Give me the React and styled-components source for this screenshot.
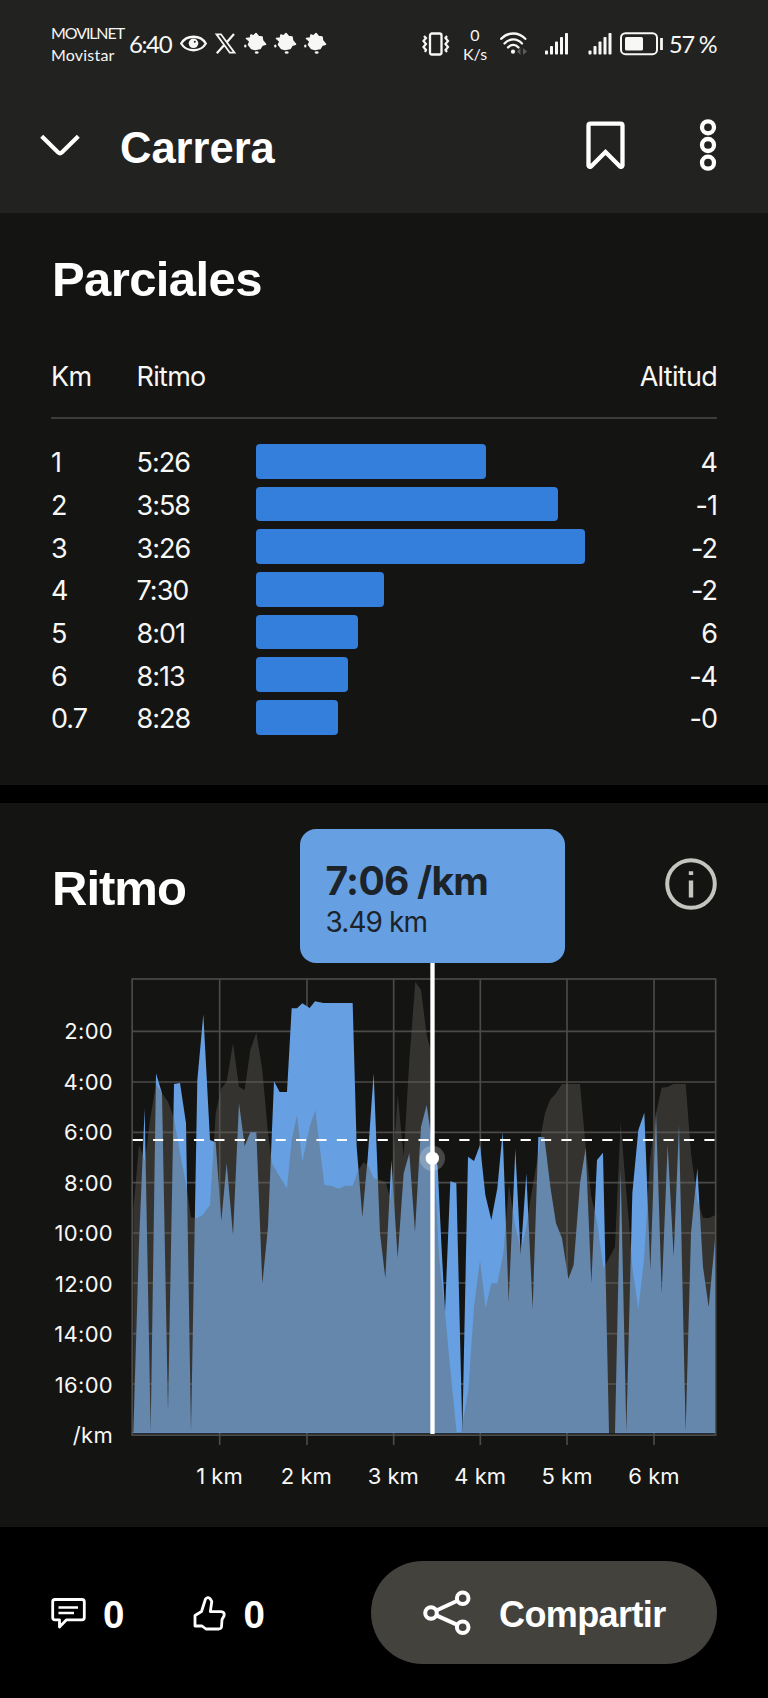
import styled, { createGlobalStyle } from "styled-components";

const GlobalStyle = createGlobalStyle`
  * {
    box-sizing: border-box;
  }

  body {
    margin: 0;
    background-color: #000;
  }

  h1, h2, p {
    margin: 0;
  }
`;

const Screen = styled.div`
  width: 768px;
  height: 1698px;
  display: flex;
  flex-direction: column;
  overflow: hidden;
  color: #f7f7f5;
  background-color: #000;
  font-family: Inter, "Liberation Sans", sans-serif;
`;

const TopArea = styled.header`
  height: 213px;
  background-color: #222220;
`;

const StatusBar = styled.div`
  height: 88px;
  padding: 0 51px;
  display: flex;
  justify-content: space-between;
  font-family: Lato, sans-serif;
`;

const StatusGroup = styled.div`
  display: flex;
  align-items: center;
`;

const Carrier = styled.div`
  width: 78px;
  display: flex;
  flex-direction: column;
`;

const CarrierName = styled.span`
  font-size: 16px;
  line-height: 22.5px;
  white-space: nowrap;
  letter-spacing: ${({ $tracking }) => $tracking};
`;

const Clock = styled.span`
  width: 51px;
  font-size: 24px;
  line-height: 30px;
  letter-spacing: -1.4px;
`;

const NetSpeed = styled.div`
  width: 26px;
  margin: 0 12px;
  display: flex;
  flex-direction: column;
  align-items: center;
  font-size: 16px;
  line-height: 19.5px;
`;

const Battery = styled.span`
  width: 48px;
  margin-left: 4px;
  font-size: 23.5px;
  line-height: 30px;
  letter-spacing: -1.2px;
  white-space: nowrap;
`;

const StatusSvg = styled.svg`
  display: block;
  flex: none;
`;

const TitleBar = styled.div`
  height: 114px;
  padding: 0 51px 0 40px;
  display: flex;
  align-items: center;
`;

const PageTitle = styled.h1`
  flex: 1;
  padding: 6px 0 0 40px;
  font-family: "Liberation Sans", Arial, sans-serif;
  font-size: 43.5px;
  font-weight: 700;
  line-height: 56px;
  color: #fff;
`;

const HeaderActions = styled.div`
  display: flex;
  align-items: center;
  gap: 74px;
`;

const Section = styled.section`
  position: relative;
  height: ${({ $height }) => $height};
  padding: 0 51px;
  background-color: #141412;
`;

const SectionTitle = styled.h2`
  padding-left: 1px;
  font-family: "Liberation Sans", Arial, sans-serif;
  font-size: 49px;
  font-weight: 700;
  line-height: 60px;
  letter-spacing: ${({ $tracking }) => $tracking};
  color: #fff;
`;

const SplitsInner = styled.div`
  padding-top: 36px;
`;

const SplitGrid = styled.div`
  display: grid;
  grid-template-columns: 85.5px 119.5px 1fr 90px;
  align-items: center;
  font-size: 27px;
  letter-spacing: -0.7px;
`;

const SplitsHead = styled(SplitGrid)`
  height: 40px;
  margin-top: 47px;
`;

const SplitRow = styled(SplitGrid)`
  height: 42.67px;
  letter-spacing: -1px;
`;

const Divider = styled.div`
  height: 2px;
  margin: 21px 0;
  background-color: #3c3c3a;
`;

const Cell = styled.span`
  padding-top: ${({ $drop }) => $drop || "0"};
  text-align: ${({ $align }) => $align || "left"};
  white-space: nowrap;
`;

const Bar = styled.div`
  height: 34.5px;
  border-radius: 4px;
  background-color: #357fdc;
`;

const Gap = styled.div`
  height: 18px;
`;

const PaceHead = styled.div`
  padding-top: 55px;
  display: flex;
  justify-content: space-between;
  align-items: flex-start;
  height: 107px;
`;

const Tooltip = styled.div`
  position: absolute;
  top: 25.5px;
  left: 300px;
  width: 264.5px;
  height: 134.5px;
  padding: 27px 25.5px;
  border-radius: 16px;
  background-color: #66a0e3;
  color: #1c2329;
`;

const TooltipPace = styled.p`
  font-size: 39px;
  font-weight: 700;
  line-height: 50px;
  letter-spacing: -0.75px;
  white-space: nowrap;
`;

const TooltipDistance = styled.p`
  font-size: 28px;
  line-height: 32px;
  letter-spacing: -0.9px;
`;

const ChartBody = styled.div`
  margin-top: 50px;
  display: flex;
  gap: 7px;
`;

const YLabels = styled.div`
  flex: none;
  width: 62px;
  padding-top: 46px;
  font-size: 22px;
  letter-spacing: 0.3px;
`;

const YLabel = styled.div`
  height: 50.5px;
  line-height: 50.5px;
  white-space: nowrap;
  display: flex;
  justify-content: flex-end;
`;

const ChartSvg = styled.svg`
  display: block;
  flex: none;
`;

const XLabels = styled.div`
  margin-left: 125px;
  display: flex;
`;

const XLabel = styled.span`
  width: 86.9px;
  text-align: center;
  font-size: 22px;
  line-height: 30px;
`;

const Footer = styled.footer`
  flex: 1;
  padding: 34px 51px 0;
  display: flex;
  align-items: flex-start;
  justify-content: space-between;
  font-family: "Liberation Sans", Arial, sans-serif;
  font-weight: 700;
  color: #fff;
`;

const Reactions = styled.div`
  height: 103px;
  display: flex;
  align-items: center;
  gap: 69px;
`;

const Reaction = styled.div`
  display: flex;
  align-items: center;
  gap: 17px;
  font-size: 38.5px;
  line-height: 44px;
`;

const ReactionCount = styled.span`
  padding-top: 5px;
`;

const ShareButton = styled.button`
  width: 346px;
  height: 103px;
  padding: 0 0 0 52px;
  display: flex;
  align-items: center;
  gap: 28px;
  border: none;
  border-radius: 52px;
  background-color: #43423d;
  color: #fff;
  font: inherit;
  font-size: 36px;
`;

const ShareText = styled.span`
  padding-top: 5px;
  letter-spacing: -0.6px;
`;

const splits = [
  { km: "1", pace: "5:26", width: 230, altitude: "4" },
  { km: "2", pace: "3:58", width: 302, altitude: "-1" },
  { km: "3", pace: "3:26", width: 328.5, altitude: "-2" },
  { km: "4", pace: "7:30", width: 128, altitude: "-2" },
  { km: "5", pace: "8:01", width: 102, altitude: "6" },
  { km: "6", pace: "8:13", width: 92, altitude: "-4" },
  { km: "0.7", pace: "8:28", width: 82, altitude: "-0" },
];

const yLabels = ["2:00", "4:00", "6:00", "8:00", "10:00", "12:00", "14:00", "16:00", "/km"];
const xLabels = ["1 km", "2 km", "3 km", "4 km", "5 km", "6 km"];

const gridX = [299, 561, 821, 1081, 1341, 1602];
const gridY = [214, 366, 517, 668, 819, 969, 1121, 1272];

const pacePoints =
  "40,1418 57,850 74,445 92,1415 108,340 126,400 144,1355 162,372 180,369 198,490 213,1415 " +
  "232,360 250,163 270,540 287,547 304,782 320,610 339,825 357,430 374,558 391,517 409,517 " +
  "427,972 444,800 462,364 479,396 501,396 515,145 531,145 547,130 569,144 585,124 610,129 " +
  "698,129 710,560 727,772 743,595 761,340 780,820 796,955 814,600 833,893 851,640 868,580 " +
  "885,815 903,500 920,435 936,545 953,620 964,850 975,1055 991,664 1009,670 1027,1415 " +
  "1044,590 1062,603 1080,555 1096,705 1114,780 1132,685 1148,515 1166,1025 1186,567 " +
  "1202,885 1219,640 1238,1048 1255,531 1273,531 1291,680 1308,790 1326,835 1345,957 " +
  "1361,915 1380,670 1397,565 1414,970 1431,600 1449,578 1467,1418 1485,1418 1502,630 " +
  "1519,1415 1537,700 1555,510 1573,458 1591,930 1608,455 1625,1000 1643,555 1661,890 " +
  "1677,495 1697,1415 1713,820 1732,625 1749,920 1766,1042 1785,840 1785,1418";

const elevationPoints =
  "40,1420 40,750 57,555 75,605 90,480 108,372 126,400 144,425 162,475 180,580 198,670 " +
  "213,772 230,775 248,765 270,735 287,460 304,385 320,365 339,250 357,380 374,390 391,270 " +
  "409,218 427,330 444,520 456,610 479,650 501,685 515,540 531,465 547,605 569,500 586,450 " +
  "613,675 635,678 657,686 675,677 698,677 715,630 731,607 745,618 761,655 780,660 797,667 " +
  "812,720 833,405 851,590 868,300 886,65 903,90 920,225 932,270 945,650 957,890 975,1055 " +
  "992,1240 1010,1418 1023,1418 1045,1290 1062,1040 1080,900 1097,1045 1114,970 1132,970 " +
  "1150,880 1167,675 1184,790 1203,870 1219,800 1232,715 1250,610 1267,500 1275,460 " +
  "1290,420 1308,400 1326,372 1380,372 1397,560 1414,710 1432,790 1450,925 1467,895 " +
  "1485,860 1502,487 1514,640 1527,790 1537,920 1555,1048 1572,900 1590,600 1608,460 " +
  "1625,383 1643,381 1660,372 1697,372 1713,580 1732,720 1749,773 1765,775 1787,765 1787,1420";

// eye, X and three leaf notifications
function NotificationIcons() {
  const leaf =
    "M2.5 6 L6.5 5.5 L7 2.5 L9.5 3.5 L12 1 L14.5 4 L18 4.5 L18.5 8 L21.5 11.8 L18 12.8 L16 16 L11 17 L7.5 16 L4.5 12 L6 9 Z";
  return (
    <StatusSvg width="148" height="24" viewBox="0 0 148 24" fill="none">
      <path d="M1.2 11.5 C6.5 2.5 20.5 2.5 25.8 11.5 C20.5 20.5 6.5 20.5 1.2 11.5 Z" stroke="#f7f7f5" strokeWidth="2.3" />
      <circle cx="13.5" cy="11.3" r="4.8" fill="#f7f7f5" />
      <circle cx="14.8" cy="9.8" r="1" fill="#222220" />
      <path d="M36.5 2.3 H41 L54.5 20.7 H49.8 Z" stroke="#f7f7f5" strokeWidth="1.8" />
      <path d="M54 2 L46.8 10.2 M44 13.3 L36.8 21.3" stroke="#f7f7f5" strokeWidth="2.2" />
      {[64, 94, 124].map((x) => (
        <g key={x} transform={`translate(${x} 0.5)`} fill="#f7f7f5">
          <path d={leaf} stroke="#f7f7f5" strokeWidth="1.6" strokeLinejoin="round" />
          <ellipse cx="1.3" cy="13.5" rx="1.2" ry="1.6" />
          <ellipse cx="12.7" cy="20" rx="1.9" ry="1.2" />
        </g>
      ))}
    </StatusSvg>
  );
}

function VibrateIcon() {
  return (
    <StatusSvg width="28" height="24" viewBox="0 0 28 24" fill="none" stroke="#f7f7f5">
      <rect x="8" y="1.5" width="11.5" height="21" rx="2" strokeWidth="2.3" />
      <path
        d="M2 4 L4 6 L1.5 9 L4 12 L1.5 15 L4 18 L3 20 M25 4 L23.5 6 L26 9 L23.5 12 L26 15 L23.5 18 L25 20"
        strokeWidth="2.2"
      />
    </StatusSvg>
  );
}

// wifi, both sims and the battery body
function ConnectivityIcons() {
  return (
    <StatusSvg width="165" height="24" viewBox="0 0 165 24" fill="none" stroke="#f7f7f5">
      <path d="M1.2 6.8 C8 -0.3 18.5 -0.3 25.3 6.8" strokeWidth="2.3" strokeLinecap="round" />
      <path d="M4.5 11.5 C9.5 6 17 6 22 11.5" strokeWidth="2.3" strokeLinecap="round" />
      <path d="M8 15.5 C11 12 15.5 12 18.5 15.5" strokeWidth="2.3" strokeLinecap="round" />
      <circle cx="13" cy="19.7" r="2.1" fill="#f7f7f5" stroke="none" />
      <path d="M17 19.5 L20.5 16 V23 Z M27 19.5 L23 16 V23 Z" fill="#5c5c5a" stroke="none" />
      {[45, 88.5].map((x) =>
        [4, 8.5, 13, 17.5, 21.5].map((h, i) => (
          <rect key={`${x}-${i}`} x={x + i * 5} y={22.5 - h} width="3" height={h} rx="0.8" fill="#f7f7f5" stroke="none" />
        ))
      )}
      <rect x="121" y="1.2" width="36" height="21" rx="4.5" strokeWidth="2" />
      <rect x="125" y="5" width="18" height="13.5" rx="1.5" fill="#f7f7f5" stroke="none" />
      <path d="M161.5 6 V18" strokeWidth="2.8" />
    </StatusSvg>
  );
}

function PaceChart() {
  return (
    <ChartSvg width="600" height="490" viewBox="0 0 1800 1470">
      <g stroke="#4b4a48" strokeWidth="5" fill="none">
        {gridX.map((x) => (
          <path key={x} d={`M${x} 57 V1455`} />
        ))}
        {gridY.map((y) => (
          <path key={y} d={`M36 ${y} H1787`} />
        ))}
        <rect x="36.5" y="57" width="1750.5" height="1368.5" />
      </g>
      <polygon points={pacePoints} fill="#66a0e3" />
      <polygon points={elevationPoints} fill="#65635c" fillOpacity="0.407" />
      <path d="M38 1418 H1467 M1485 1418 H1785" stroke="#6fa3dc" strokeWidth="2" />
      <path d="M38 540 H1785" stroke="#fff" strokeWidth="6" strokeDasharray="30.5 30.75" />
      <path d="M937.5 0 V1422" stroke="#fff" strokeWidth="13" />
      <circle cx="937" cy="595" r="38" fill="#fff" fillOpacity="0.22" />
      <circle cx="937" cy="595" r="20" fill="#fff" />
    </ChartSvg>
  );
}

function App() {
  return (
    <>
      <GlobalStyle />
      <Screen>
        <TopArea>
          <StatusBar>
            <StatusGroup>
              <Carrier>
                <CarrierName $tracking="-1.1px">MOVILNET</CarrierName>
                <CarrierName $tracking="0.2px">Movistar</CarrierName>
              </Carrier>
              <Clock>6:40</Clock>
              <NotificationIcons />
            </StatusGroup>
            <StatusGroup>
              <VibrateIcon />
              <NetSpeed>
                <span>0</span>
                <span>K/s</span>
              </NetSpeed>
              <ConnectivityIcons />
              <Battery>57 %</Battery>
            </StatusGroup>
          </StatusBar>

          <TitleBar>
            <svg width="40" height="24" viewBox="0 0 40 24" fill="none">
              <path d="M1.7 3.2 L18.2 19.5 Q20 21 21.8 19.5 L38.3 3.2" stroke="#fff" strokeWidth="4.2" />
            </svg>
            <PageTitle>Carrera</PageTitle>
            <HeaderActions>
              <svg width="39" height="49" viewBox="0 0 39 49" fill="none">
                <path
                  d="M4.5 2.7 H34.5 Q36.5 2.7 36.5 4.7 V44.5 Q36 46.5 34 45.5 L19.5 31 L5 45.5 Q3 46.5 2.5 44.5 V4.7 Q2.5 2.7 4.5 2.7 Z"
                  stroke="#fff"
                  strokeWidth="4.3"
                />
              </svg>
              <svg width="18" height="52" viewBox="0 0 18 52" fill="none" stroke="#fff" strokeWidth="4.3">
                <circle cx="9" cy="8.3" r="6" />
                <circle cx="9" cy="26" r="6" />
                <circle cx="9" cy="43.7" r="6" />
              </svg>
            </HeaderActions>
          </TitleBar>
        </TopArea>

        <Section $height="572px">
          <SplitsInner>
            <SectionTitle $tracking="-0.6px">Parciales</SectionTitle>
            <SplitsHead>
              <Cell>Km</Cell>
              <Cell>Ritmo</Cell>
              <span />
              <Cell $align="right">Altitud</Cell>
            </SplitsHead>
            <Divider />
            {splits.map((split) => (
              <SplitRow key={split.km}>
                <Cell $drop="3px">{split.km}</Cell>
                <Cell $drop="3px">{split.pace}</Cell>
                <Bar style={{ width: split.width }} />
                <Cell $drop="3px" $align="right">
                  {split.altitude}
                </Cell>
              </SplitRow>
            ))}
          </SplitsInner>
        </Section>

        <Gap />

        <Section $height="724px">
          <PaceHead>
            <SectionTitle $tracking="-1px">Ritmo</SectionTitle>
            <svg width="52" height="52" viewBox="0 0 52 52" fill="none">
              <circle cx="26" cy="26" r="23.8" stroke="#c5c5bf" strokeWidth="4" />
              <path d="M26 13.3 V17 M26 22.5 V39.5" stroke="#c5c5bf" strokeWidth="4.4" />
            </svg>
          </PaceHead>
          <ChartBody>
            <YLabels>
              {yLabels.map((label) => (
                <YLabel key={label}>{label}</YLabel>
              ))}
            </YLabels>
            <PaceChart />
          </ChartBody>
          <XLabels>
            {xLabels.map((label) => (
              <XLabel key={label}>{label}</XLabel>
            ))}
          </XLabels>
          <Tooltip>
            <TooltipPace>7:06 /km</TooltipPace>
            <TooltipDistance>3.49 km</TooltipDistance>
          </Tooltip>
        </Section>

        <Footer>
          <Reactions>
            <Reaction>
              <svg width="35" height="34" viewBox="0 0 35 34" fill="none" stroke="#fff">
                <path
                  d="M4 3.5 H31 Q33.3 3.5 33.3 5.8 V21.5 Q33.3 23.8 31 23.8 H15.5 L8.5 31 V23.8 H4 Q1.7 23.8 1.7 21.5 V5.8 Q1.7 3.5 4 3.5 Z"
                  strokeWidth="2.8"
                  strokeLinejoin="round"
                />
                <path d="M7.5 11.5 H27 M7.5 17 H23" strokeWidth="2.5" />
              </svg>
              <ReactionCount>0</ReactionCount>
            </Reaction>
            <Reaction>
              <svg width="33" height="36" viewBox="0 0 33 36" fill="none" stroke="#fff">
                <path
                  d="M2 20.5 L8.5 16.5 L12.5 4 Q14.5 1.5 17 3.5 L18.8 6.5 L17.3 16.7 H28 Q32 17 31 21 L29 24.5 L28.5 32 Q28 34 25.5 34 H13 L9 31 H2 Z"
                  strokeWidth="2.8"
                  strokeLinejoin="round"
                />
              </svg>
              <ReactionCount>0</ReactionCount>
            </Reaction>
          </Reactions>
          <ShareButton>
            <svg width="48" height="46" viewBox="0 0 48 46" fill="none" stroke="#fff" strokeWidth="4">
              <circle cx="8" cy="23" r="5.8" />
              <circle cx="39.7" cy="8.3" r="5.8" />
              <circle cx="39.7" cy="37.3" r="5.8" />
              <path d="M13.3 20.5 L34.4 10.8 M13.3 25.4 L34.4 34.9" />
            </svg>
            <ShareText>Compartir</ShareText>
          </ShareButton>
        </Footer>
      </Screen>
    </>
  );
}

export default App;
